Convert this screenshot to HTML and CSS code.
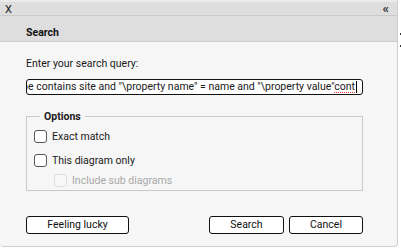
FILE: index.html
```html
<!DOCTYPE html>
<html>
<head>
<meta charset="utf-8">
<link rel="stylesheet" href="styles.css">
</head>
<body>
<div class="dialog">
  <div class="topbar">
    <span class="close">X</span>
    <span class="collapse">«</span>
  </div>
  <div class="titlebar">Search</div>
  <div class="content">
    <div class="label">Enter your search query:</div>
    <div class="query"><span class="qtext">Type contains site and "\property name" = name and "\property value"<span class="spell">cont</span></span><span class="caret"></span></div>
    <fieldset class="options">
      <legend>Options</legend>
      <div class="row"><span class="cb"></span><span>Exact match</span></div>
      <div class="row"><span class="cb"></span><span>This diagram only</span></div>
      <div class="row sub disabled"><span class="cb"></span><span>Include sub diagrams</span></div>
    </fieldset>
    <div class="buttons">
      <button class="btn lucky">Feeling lucky</button>
      <div class="right">
        <button class="btn search">Search</button>
        <button class="btn cancel">Cancel</button>
      </div>
    </div>
  </div>
</div>
<span class="dot d1"></span>
<span class="dot d2"></span>
</body>
</html>
```
FILE: styles.css
```css
html, body {
  margin: 0;
  padding: 0;
  background: #ffffff;
}
body {
  font-family: Roboto, "Liberation Sans", sans-serif;
  font-size: 10.5px;
  color: #1a1a1a;
  width: 401px;
  height: 248px;
  overflow: hidden;
  position: relative;
}
.dialog {
  width: 397px;
  height: 246px;
  background: #f6f6f6;
  border-right: 1px solid #cfcfcf;
  border-bottom: 1px solid #cfcfcf;
  border-radius: 0 0 4px 4px;
  display: flex;
  flex-direction: column;
  overflow: hidden;
}
.topbar {
  box-sizing: border-box;
  height: 16px;
  background: #dedede;
  border-top: 2px solid #ebebeb;
  border-bottom: 1px solid #c9c9c9;
  display: flex;
  justify-content: space-between;
  align-items: flex-start;
  padding: 2px 8px 0 5px;
  color: #222;
}
.close {
  font-size: 11px;
  line-height: 11px;
}
.collapse {
  font-size: 13px;
  line-height: 10px;
  font-weight: bold;
  color: #333;
}
.titlebar {
  box-sizing: border-box;
  height: 26px;
  background: #dedede;
  border-bottom: 1px solid #cccccc;
  font-weight: bold;
  font-size: 10.5px;
  padding: 11px 0 0 26px;
  line-height: 12px;
  color: #111;
}
.content {
  padding: 15px 34px 0 26px;
  display: flex;
  flex-direction: column;
}
.label {
  line-height: 13px;
  height: 13px;
}
.query {
  margin-top: 9px;
  height: 14px;
  border: 1px solid #111;
  border-radius: 3px;
  background: #fff;
  display: flex;
  justify-content: flex-end;
  align-items: center;
  overflow: hidden;
  padding-right: 5px;
  white-space: nowrap;
  line-height: 14px;
}
.qtext {
  flex: none;
}
.spell {
  text-decoration: underline dotted #e03030;
  text-decoration-thickness: 1px;
  text-underline-offset: 2px;
}
.caret {
  flex: none;
  width: 1px;
  height: 12px;
  background: #000;
  margin-left: 1px;
}
.options {
  margin: 15px 0 0 0;
  border: 1px solid #c9c9c9;
  padding: 7px 0 0 7px;
  height: 72px;
  min-width: 0;
}
.options legend {
  font-weight: bold;
  padding: 0 4px;
  margin-left: 6px;
  line-height: 13px;
}
.row {
  display: flex;
  align-items: center;
  gap: 5px;
  height: 13px;
  margin-bottom: 11px;
}
.row.sub {
  margin-left: 20px;
  margin-top: -4px;
}
.cb {
  box-sizing: border-box;
  width: 13px;
  height: 13px;
  border: 1px solid #555;
  border-radius: 3px;
  background: #fff;
}
.disabled {
  color: #a8a8a8;
}
.disabled .cb {
  border-color: #dcdcdc;
  background: #f8f8f8;
}
.buttons {
  margin-top: 25px;
  display: flex;
  justify-content: space-between;
}
.right {
  display: flex;
  gap: 5px;
}
.btn {
  font-family: Roboto, "Liberation Sans", sans-serif;
  font-size: 10.5px;
  height: 18px;
  background: #fff;
  border: 1px solid #111;
  border-radius: 3px;
  padding: 0;
  color: #111;
  line-height: 16px;
}
.lucky { width: 103px; }
.search { width: 75px; }
.cancel { width: 74px; }
.dot {
  position: absolute;
  left: 400px;
  width: 1px;
  height: 2px;
  background: #333;
}
.d1 { top: 33px; }
.d2 { top: 45px; }
```
